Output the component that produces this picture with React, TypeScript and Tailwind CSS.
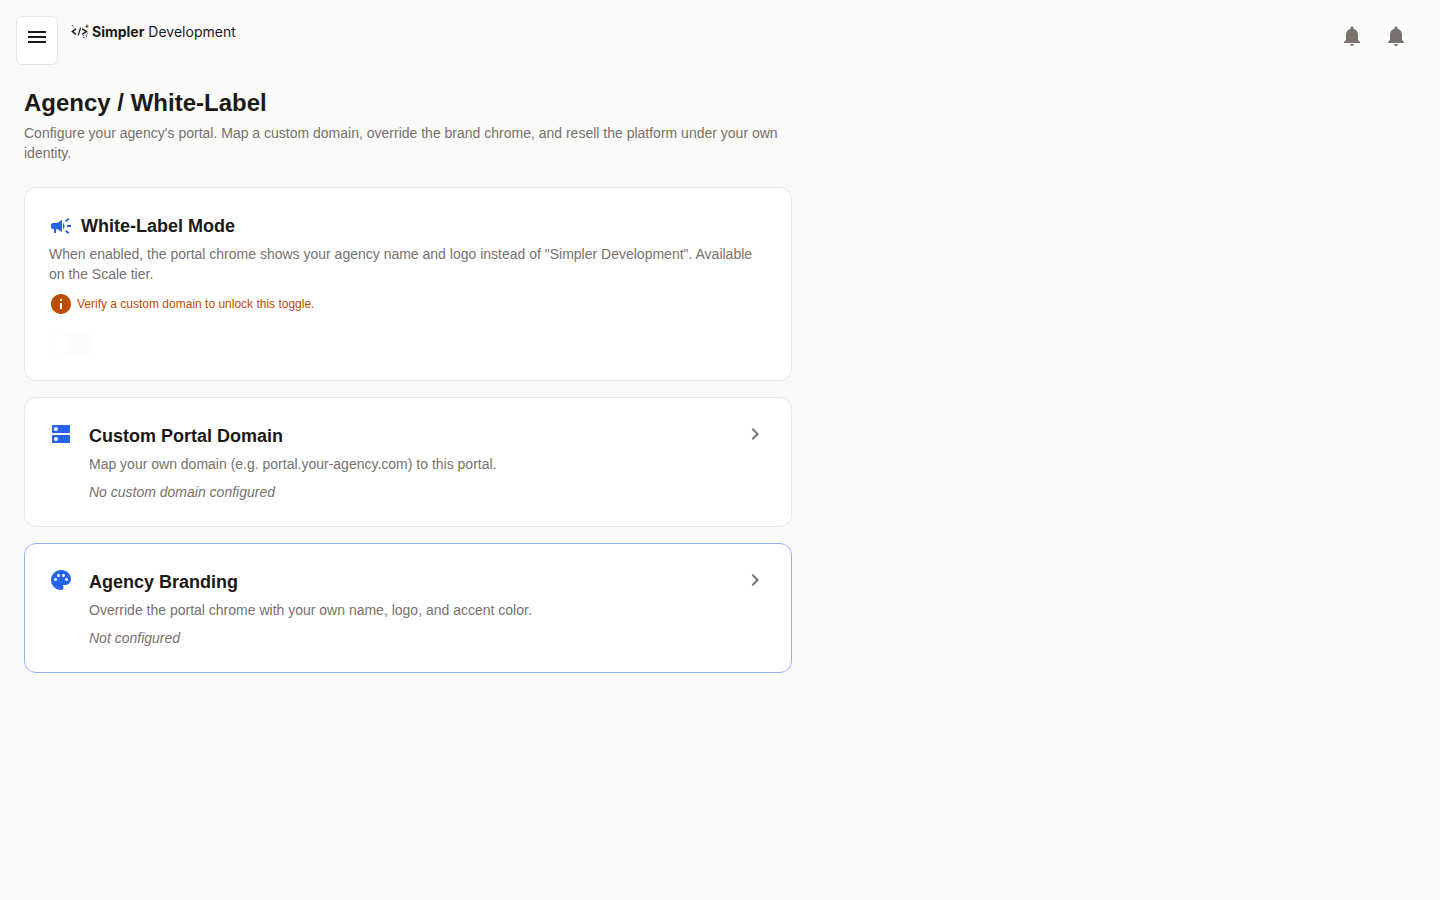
import type { ReactNode } from "react";
import {
  MdCampaign,
  MdChevronRight,
  MdDns,
  MdInfo,
  MdMenu,
  MdNotifications,
  MdPalette,
} from "react-icons/md";

function LogoMark() {
  return (
    <svg viewBox="0 0 18 16" className="h-4 w-[18px]" fill="none" stroke="#1c1917" aria-hidden="true">
      <path d="M5 4.8 1.4 7.6 5 10.4" strokeWidth="1.5" />
      <path d="M9.6 3.8 7.2 11.4" strokeWidth="1.2" />
      <path d="M11.2 4.8 15.4 7.6 11.2 10.4" strokeWidth="1.5" />
      <path d="M16 .6v3.4M14.3 2.3h3.4" strokeWidth=".8" />
      <path d="M.8 1.8h1.6M2.6 3.2h.8" strokeWidth=".8" />
      <path d="M12 11.6h1.2M14.8 11.2h1.4M12.2 13.6h1.2M15 12.9h1M16 9.2h1" strokeWidth=".9" />
    </svg>
  );
}

function Logo() {
  return (
    <a href="#home" className="flex h-8 items-center gap-[3px] font-['Inter',sans-serif] text-sm text-stone-900">
      <LogoMark />
      <span>
        <strong className="font-bold">Simpler</strong> Development
      </span>
    </a>
  );
}

function Header() {
  return (
    <header className="flex items-start justify-between pt-4 pr-8 pl-4">
      <div className="flex items-start gap-[13px]">
        <button
          type="button"
          aria-label="Open menu"
          className="rounded-md border border-[#e5e5e5] bg-white px-2 pt-2 pb-[15px] text-stone-900"
        >
          <MdMenu className="size-6" />
        </button>
        <Logo />
      </div>
      <div className="flex gap-5 pt-2 text-[#78716c]">
        <button type="button" aria-label="Notifications">
          <MdNotifications className="size-6" />
        </button>
        <button type="button" aria-label="Alerts">
          <MdNotifications className="size-6" />
        </button>
      </div>
    </header>
  );
}

type LinkCardProps = {
  href: string;
  icon: ReactNode;
  title: string;
  description: string;
  status: string;
  active?: boolean;
};

function LinkCard({ href, icon, title, description, status, active }: LinkCardProps) {
  return (
    <a
      href={href}
      className={`flex items-start gap-4 rounded-xl border bg-white p-6 ${
        active ? "border-[#92b1f5]" : "border-[#e5e5e5]"
      }`}
    >
      <span className="text-[#2563eb]">{icon}</span>
      <div className="flex-1">
        <h2 className="text-lg leading-7 font-bold text-stone-900">{title}</h2>
        <p className="mt-1 text-sm leading-5 text-[#78716c]">{description}</p>
        <p className="mt-2 text-sm leading-5 text-[#78716c] italic">{status}</p>
      </div>
      <MdChevronRight className="size-6 text-[#78716c]" />
    </a>
  );
}

function WhiteLabelCard() {
  return (
    <section className="rounded-xl border border-[#e5e5e5] bg-white p-6">
      <h2 className="flex items-center gap-2 text-lg leading-7 font-bold text-stone-900">
        <MdCampaign className="size-6 text-[#2563eb]" />
        White-Label Mode
      </h2>
      <p className="mt-1 text-sm leading-5 text-[#78716c]">
        When enabled, the portal chrome shows your agency name and logo instead of "Simpler
        Development". Available on the Scale tier.
      </p>
      <p className="mt-2 flex items-center gap-1 text-xs text-[#bb4d00]">
        <MdInfo className="size-6" />
        Verify a custom domain to unlock this toggle.
      </p>
      <button
        type="button"
        role="switch"
        aria-checked="false"
        aria-label="White-Label Mode"
        disabled
        className="mt-4 flex h-6 w-11 items-center rounded-full bg-[#fcfcfc] px-[2px]"
      >
        <span className="size-5 rounded-full bg-white" />
      </button>
    </section>
  );
}

export default function App() {
  return (
    <div className="min-h-screen bg-[#fafaf9] font-['Liberation_Sans',Arial,sans-serif] text-stone-900">
      <Header />
      <main className="max-w-[816px] px-6 pt-[22px] pb-6">
        <h1 className="text-2xl leading-8 font-bold">Agency / White-Label</h1>
        <p className="mt-1 text-sm leading-5 text-[#78716c]">
          Configure your agency's portal. Map a custom domain, override the brand chrome, and resell
          the platform under your own identity.
        </p>
        <div className="mt-6 flex flex-col gap-4">
          <WhiteLabelCard />
          <LinkCard
            href="#domain"
            icon={<MdDns className="size-6" />}
            title="Custom Portal Domain"
            description="Map your own domain (e.g. portal.your-agency.com) to this portal."
            status="No custom domain configured"
          />
          <LinkCard
            href="#branding"
            icon={<MdPalette className="size-6" />}
            title="Agency Branding"
            description="Override the portal chrome with your own name, logo, and accent color."
            status="Not configured"
            active
          />
        </div>
      </main>
    </div>
  );
}
